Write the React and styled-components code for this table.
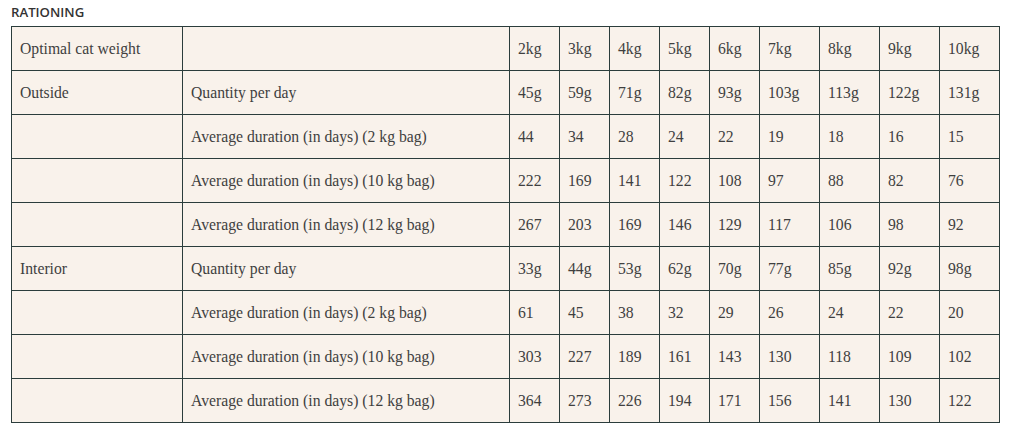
import React from "react";
import styled, { createGlobalStyle } from "styled-components";

const GlobalStyle = createGlobalStyle`
  html, body {
    margin: 0;
    padding: 0;
    background: #ffffff;
  }
`;

const Page = styled.div`
  padding: 5px 0 0 11px;
`;

const Title = styled.h3`
  margin: 0 0 6px 0;
  font-family: "Open Sans", "Liberation Sans", sans-serif;
  font-weight: 600;
  font-size: 13.2px;
  line-height: 15px;
  color: #333333;
`;

const Table = styled.table`
  border-collapse: collapse;
  table-layout: fixed;
  width: 989px;
  background: #f9f2eb;
  font-family: "Liberation Serif", "Times New Roman", serif;
  font-size: 15.7px;
  color: #3f3f3f;
`;

const Row = styled.tr`
  height: 44px;
`;

const Cell = styled.td`
  border: 1px solid #2b3d3c;
  padding: 0 0 0 8px;
  vertical-align: middle;
  white-space: nowrap;
  overflow: hidden;
  line-height: 18px;
`;

const weights = ["2kg", "3kg", "4kg", "5kg", "6kg", "7kg", "8kg", "9kg", "10kg"];
const widths = [171, 327, 50, 50, 50, 50, 50, 60, 60, 60, 60];

const rows = [
  ["Outside", "Quantity per day", ["45g", "59g", "71g", "82g", "93g", "103g", "113g", "122g", "131g"]],
  ["", "Average duration (in days) (2 kg bag)", ["44", "34", "28", "24", "22", "19", "18", "16", "15"]],
  ["", "Average duration (in days) (10 kg bag)", ["222", "169", "141", "122", "108", "97", "88", "82", "76"]],
  ["", "Average duration (in days) (12 kg bag)", ["267", "203", "169", "146", "129", "117", "106", "98", "92"]],
  ["Interior", "Quantity per day", ["33g", "44g", "53g", "62g", "70g", "77g", "85g", "92g", "98g"]],
  ["", "Average duration (in days) (2 kg bag)", ["61", "45", "38", "32", "29", "26", "24", "22", "20"]],
  ["", "Average duration (in days) (10 kg bag)", ["303", "227", "189", "161", "143", "130", "118", "109", "102"]],
  ["", "Average duration (in days) (12 kg bag)", ["364", "273", "226", "194", "171", "156", "141", "130", "122"]],
];

export default function App() {
  return (
    <Page>
      <GlobalStyle />
      <Title>RATIONING</Title>
      <Table>
        <colgroup>
          {widths.map((w, i) => (
            <col key={i} style={{ width: w }} />
          ))}
        </colgroup>
        <tbody>
          <Row>
            <Cell>Optimal cat weight</Cell>
            <Cell />
            {weights.map((w) => (
              <Cell key={w}>{w}</Cell>
            ))}
          </Row>
          {rows.map(([group, label, values], i) => (
            <Row key={i}>
              <Cell>{group}</Cell>
              <Cell>{label}</Cell>
              {values.map((v, j) => (
                <Cell key={j}>{v}</Cell>
              ))}
            </Row>
          ))}
        </tbody>
      </Table>
    </Page>
  );
}
